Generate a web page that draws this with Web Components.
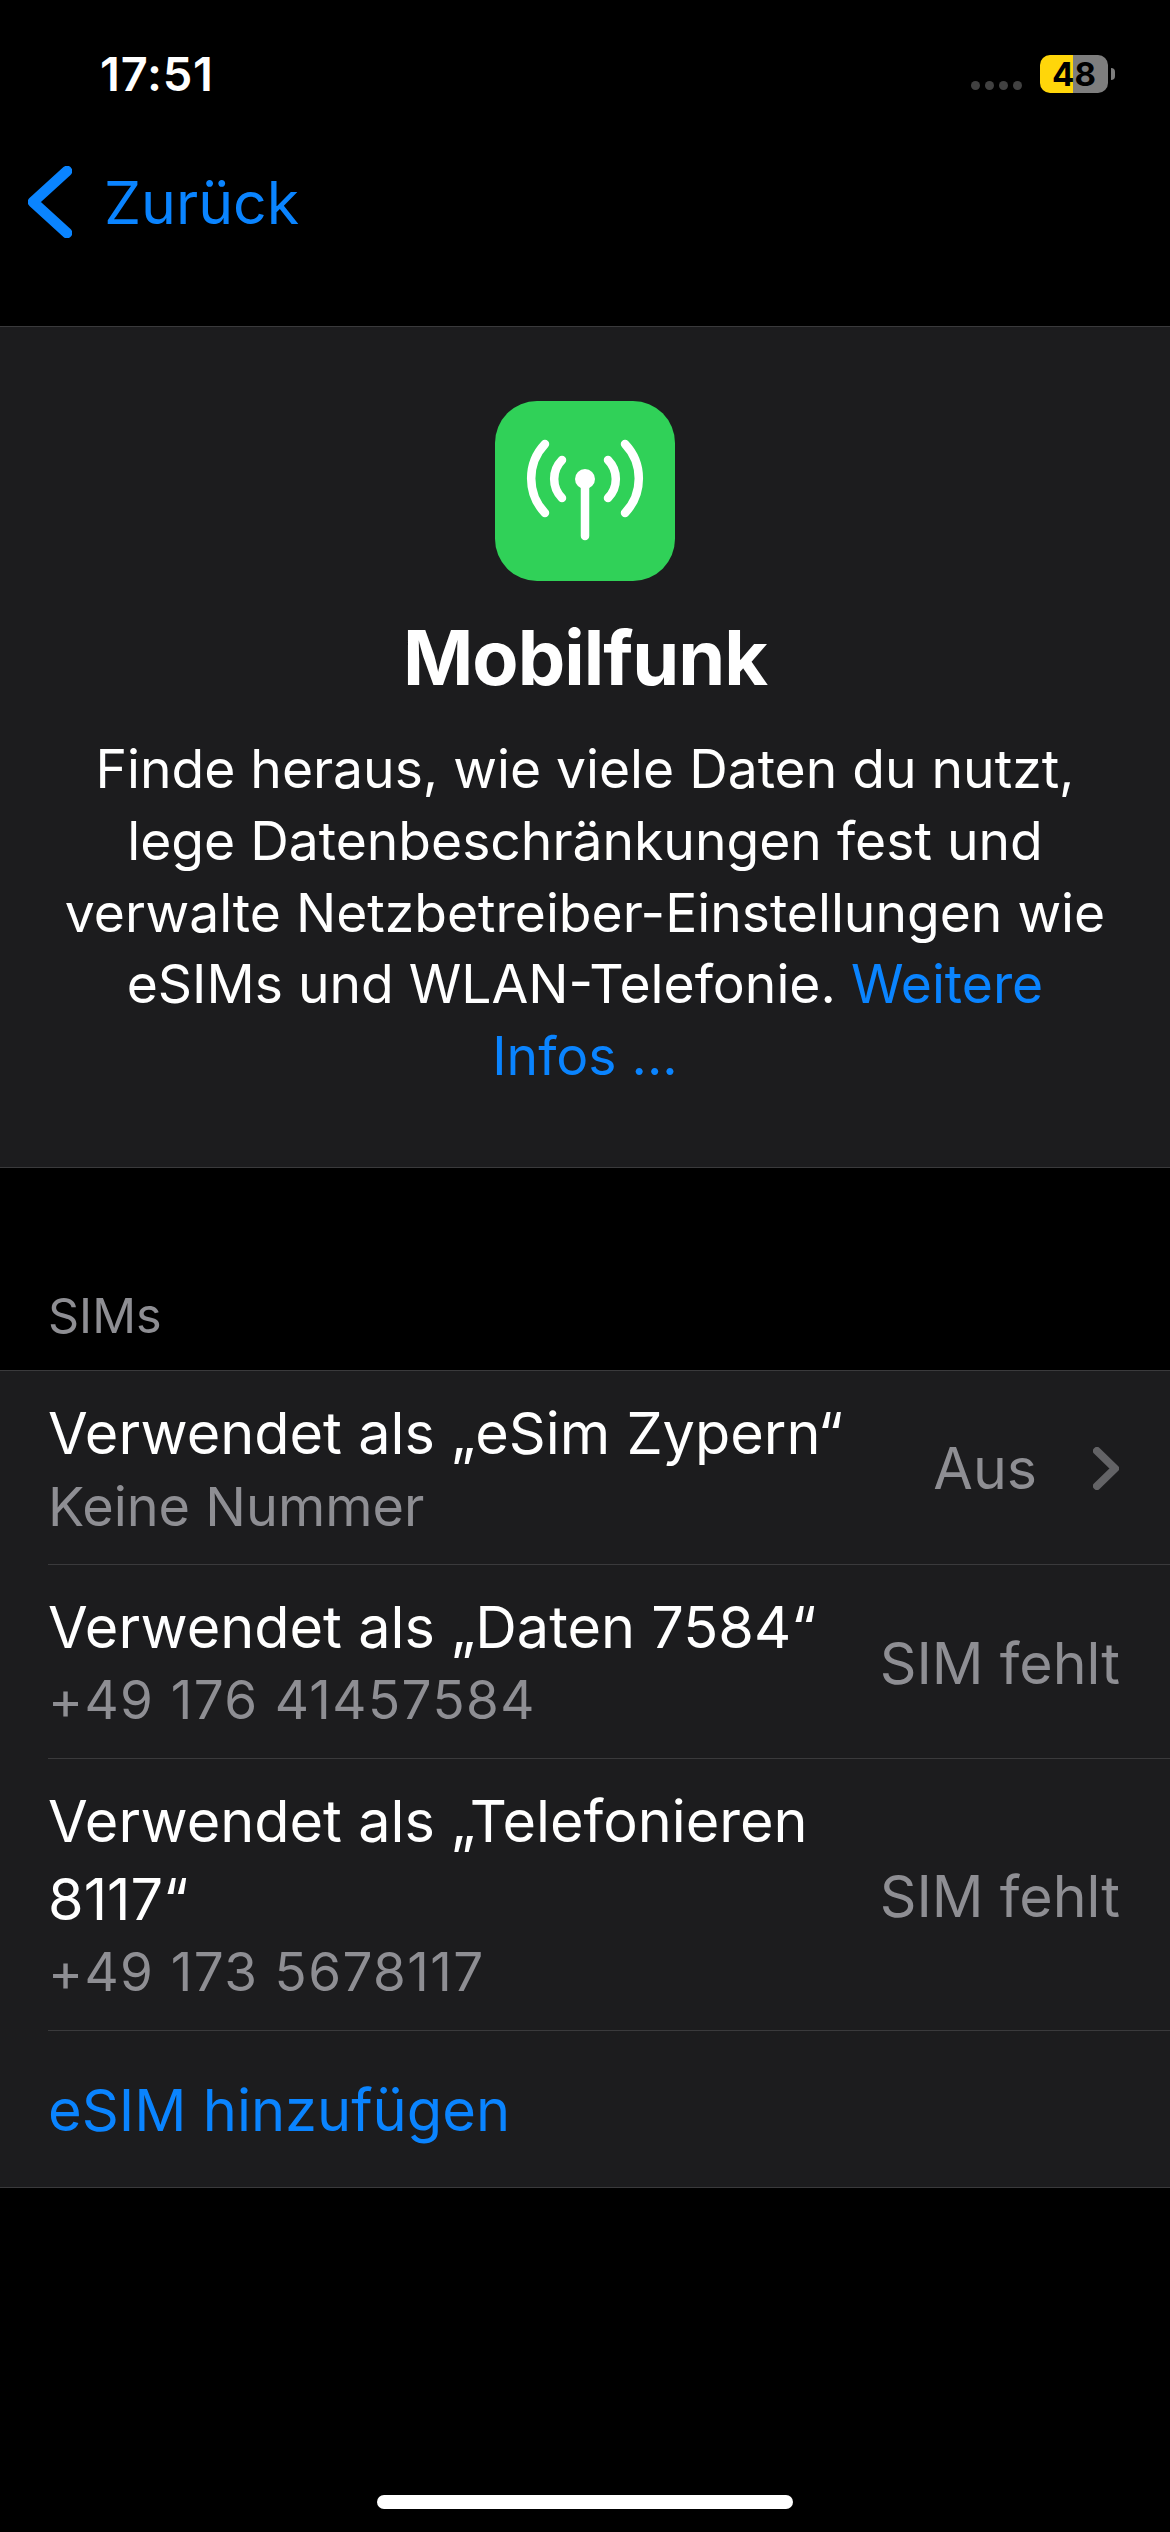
<!DOCTYPE html>
<html lang="de">
<head>
<meta charset="utf-8">
<title>Mobilfunk</title>
<style>
  html, body { margin: 0; background: #000; }
  body { width: 1170px; height: 2532px; overflow: hidden; font-family: Inter, "Liberation Sans", sans-serif; color: #fff; display: flex; flex-direction: column; }
</style>
</head>
<body>
<status-bar time="17:51" level="48"></status-bar>
<nav-back>Zurück</nav-back>
<info-hero title="Mobilfunk">
  Finde heraus, wie viele Daten du nutzt,<br>
  lege Datenbeschränkungen fest und<br>
  verwalte Netzbetreiber-Einstellungen wie<br>
  eSIMs und WLAN-Telefonie. <a>Weitere<br>Infos ...</a>
</info-hero>
<sim-section heading="SIMs">
  <sim-row sub="Keine Nummer" value="Aus" chevron>Verwendet als „eSim Zypern“</sim-row>
  <sim-row sub="+49 176 41457584" sub-spaced value="SIM fehlt">Verwendet als „Daten 7584“</sim-row>
  <sim-row sub="+49 173 5678117" sub-spaced value="SIM fehlt">Verwendet als „Telefonieren<br>8117“</sim-row>
  <sim-action>eSIM hinzufügen</sim-action>
</sim-section>
<home-bar></home-bar>

<script>
class StatusBar extends HTMLElement {
  constructor() {
    super();
    this.attachShadow({ mode: "open" });
    const time = this.getAttribute("time");
    const level = this.getAttribute("level");
    this.shadowRoot.innerHTML = `
      <style>
        :host { display: flex; align-items: flex-start; height: 148px; flex: none; box-sizing: border-box; padding: 51px 55px 0 100px; justify-content: space-between; }
        .time { font-size: 47px; line-height: 46px; font-weight: 600; letter-spacing: 0.8px; }
        .right { display: flex; align-items: center; gap: 0; margin-top: 4px; }
        .dots { display: flex; gap: 5px; margin: 22px 18px 0 0; }
        .dots i { width: 9px; height: 9px; border-radius: 50%; background: #414141; }
        .batt { position: relative; width: 68px; height: 38px; border-radius: 10px; overflow: hidden; background: linear-gradient(90deg, #ffd60a 33px, #7e7e7e 33px); color: #000; font-size: 33px; line-height: 38px; font-weight: 700; text-align: center; }
        .tip { width: 4px; height: 12px; margin-left: 3px; background: #7e7e7e; border-radius: 0 6px 6px 0; }
      </style>
      <span class="time">${time}</span>
      <div class="right">
        <div class="dots"><i></i><i></i><i></i><i></i></div>
        <div class="batt">${level}</div>
        <div class="tip"></div>
      </div>`;
  }
}

class NavBack extends HTMLElement {
  constructor() {
    super();
    this.attachShadow({ mode: "open" });
    this.shadowRoot.innerHTML = `
      <style>
        :host { display: flex; align-items: center; height: 178px; flex: none; box-sizing: border-box; padding: 0 0 70px 28px; color: #0a84ff; font-size: 59px; }
        svg { width: 44px; height: 72px; margin-right: 32px; flex: none; }
      </style>
      <svg viewBox="0 0 44 72" fill="none" stroke="#0a84ff" stroke-width="10.5" stroke-linecap="round" stroke-linejoin="round"><path d="M39 5 L5 36 L39 67"/></svg>
      <slot></slot>`;
  }
}

class InfoHero extends HTMLElement {
  constructor() {
    super();
    this.attachShadow({ mode: "open" });
    this.shadowRoot.innerHTML = `
      <style>
        :host { display: flex; flex-direction: column; align-items: center; flex: none; height: 842px; box-sizing: border-box; padding-top: 74px; background: #1c1c1e; border-top: 1px solid #3a3a3c; border-bottom: 1px solid #3a3a3c; text-align: center; }
        svg { width: 180px; height: 180px; display: block; flex: none; }
        h1 { margin: 33px 0 0; font-size: 75.5px; line-height: 88px; font-weight: 700; letter-spacing: -1px; }
        .body { margin-top: 31px; font-size: 53.4px; line-height: 71.8px; white-space: nowrap; }
        ::slotted(a) { color: #0a84ff; }
      </style>
      <svg viewBox="0 0 180 180">
        <rect width="180" height="180" rx="42" fill="#30d158"/>
        <g fill="none" stroke="#fff" stroke-width="8.5" stroke-linecap="round">
          <path d="M50 43 A50 50 0 0 0 50 112"/>
          <path d="M67 59 A27 27 0 0 0 67 97"/>
          <path d="M130 43 A50 50 0 0 1 130 112"/>
          <path d="M113 59 A27 27 0 0 1 113 97"/>
          <path d="M90 78 V135"/>
        </g>
        <circle cx="90" cy="78" r="10" fill="#fff"/>
      </svg>
      <h1>${this.getAttribute("title")}</h1>
      <div class="body"><slot></slot></div>`;
  }
}

class SimSection extends HTMLElement {
  constructor() {
    super();
    this.attachShadow({ mode: "open" });
    this.shadowRoot.innerHTML = `
      <style>
        :host { display: block; flex: none; margin-top: 106px; }
        .head { padding: 0 0 12px 48px; font-size: 48.5px; line-height: 84px; color: #8e8e93; }
        .list { background: #1c1c1e; border-top: 1px solid #3a3a3c; border-bottom: 1px solid #3a3a3c; }
      </style>
      <div class="head">${this.getAttribute("heading")}</div>
      <div class="list"><slot></slot></div>`;
  }
}

class SimRow extends HTMLElement {
  constructor() {
    super();
    this.attachShadow({ mode: "open" });
    const chevron = this.hasAttribute("chevron");
    this.shadowRoot.innerHTML = `
      <style>
        :host { display: block; margin-left: 48px; box-sizing: border-box; border-bottom: 1px solid #3a3a3c; padding: 23.5px 50px 22px 0; }
        .wrap { display: flex; align-items: center; justify-content: space-between; }
        .title { font-size: 57.6px; line-height: 77.7px; white-space: nowrap; }
        .sub { font-size: ${this.hasAttribute("sub-spaced") ? "53px" : "54px"}; line-height: 71px; color: #8e8e93; white-space: nowrap; margin-top: -1px; letter-spacing: ${this.hasAttribute("sub-spaced") ? "1.4px" : "0"}; }
        .value { display: flex; align-items: center; font-size: 57.3px; color: #8e8e93; white-space: nowrap; }
        svg { width: 26px; height: 43px; margin-left: 56px; margin-right: 1px; }
      </style>
      <div class="wrap">
        <div>
          <div class="title"><slot></slot></div>
          <div class="sub">${this.getAttribute("sub")}</div>
        </div>
        <div class="value">${this.getAttribute("value")}${chevron ? `<svg viewBox="0 0 26 43" fill="none" stroke="#636366" stroke-width="8" stroke-linecap="round" stroke-linejoin="round"><path d="M4 4 L22 21.5 L4 39"/></svg>` : ""}</div>
      </div>`;
  }
}

class SimAction extends HTMLElement {
  constructor() {
    super();
    this.attachShadow({ mode: "open" });
    this.shadowRoot.innerHTML = `
      <style>
        :host { display: block; padding-left: 48px; height: 156px; line-height: 158px; font-size: 57.8px; color: #0a84ff; }
      </style>
      <slot></slot>`;
  }
}

class HomeBar extends HTMLElement {
  constructor() {
    super();
    this.attachShadow({ mode: "open" });
    this.shadowRoot.innerHTML = `
      <style>
        :host { display: flex; justify-content: center; align-items: flex-end; flex: 1; padding-bottom: 23px; }
        i { width: 416px; height: 14px; border-radius: 7px; background: #fff; }
      </style>
      <i></i>`;
  }
}

customElements.define("status-bar", StatusBar);
customElements.define("nav-back", NavBack);
customElements.define("info-hero", InfoHero);
customElements.define("sim-section", SimSection);
customElements.define("sim-row", SimRow);
customElements.define("sim-action", SimAction);
customElements.define("home-bar", HomeBar);
</script>
</body>
</html>
